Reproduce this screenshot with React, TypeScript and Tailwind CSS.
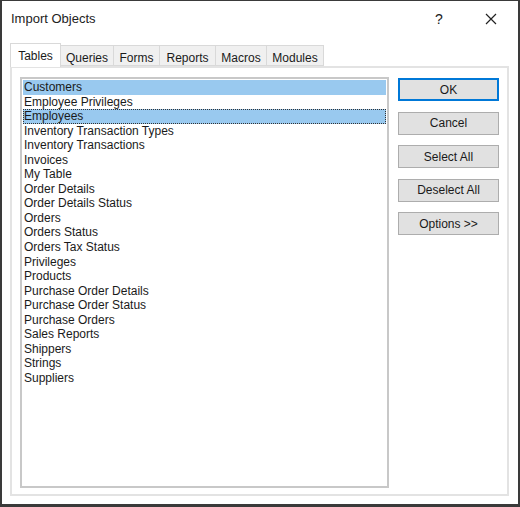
const tabs: [string, number][] = [
  ["Tables", 51],
  ["Queries", 53],
  ["Forms", 46],
  ["Reports", 56],
  ["Macros", 51],
  ["Modules", 57],
];

const items = [
  "Customers",
  "Employee Privileges",
  "Employees",
  "Inventory Transaction Types",
  "Inventory Transactions",
  "Invoices",
  "My Table",
  "Order Details",
  "Order Details Status",
  "Orders",
  "Orders Status",
  "Orders Tax Status",
  "Privileges",
  "Products",
  "Purchase Order Details",
  "Purchase Order Status",
  "Purchase Orders",
  "Sales Reports",
  "Shippers",
  "Strings",
  "Suppliers",
];

const buttons = ["OK", "Cancel", "Select All", "Deselect All", "Options >>"];

export default function App() {
  return (
    <div
      className="w-[520px] h-[507px] bg-white border-x-2 border-b-[3px] border-t border-[#3a3a3a] relative text-[12px] text-[#1a1a1a]"
      style={{ fontFamily: '"Liberation Sans", Arial, sans-serif' }}
    >
      {/* title bar */}
      <div className="h-[36px] flex items-center pl-[9px] pr-[18px]">
        <span className="text-[13px] text-[#222] flex-1">Import Objects</span>
        <span className="text-[14px] w-[10px] mr-[40px]">?</span>
        <svg width="12" height="12" viewBox="0 0 12 12" className="mr-[3px]">
          <path d="M1 1 L11 11 M11 1 L1 11" stroke="#222" strokeWidth="1.2" />
        </svg>
      </div>

      {/* tabs */}
      <div className="ml-[8px] mt-[5px] flex items-end h-[24px]">
        {tabs.map(([t, w], i) =>
          i === 0 ? (
            <div
              key={t}
              style={{ width: w }}
              className="h-[24px] pt-[3px] text-center bg-white border border-b-0 border-[#d9d9d9] relative z-10 -mb-px"
            >
              {t}
            </div>
          ) : (
            <div
              key={t}
              style={{ width: w }}
              className="h-[21px] pt-[3px] text-center bg-[#f0f0f0] border border-l-0 border-[#d9d9d9]"
            >
              {t}
            </div>
          )
        )}
      </div>

      {/* panel */}
      <div className="ml-[8px] w-[499px] h-[430px] border-2 border-[#e3e3e3] flex gap-[9px] pl-[8px] pt-[9px]">
        <div className="w-[369px] h-[411px] border-2 border-[#c8c8c8] pt-px px-px">
          {items.map((it) => {
            const sel = it === "Customers" || it === "Employees";
            const focus = it === "Employees";
            return (
              <div
                key={it}
                className={
                  "h-[14.55px] leading-[14px] pl-px " +
                  (sel ? "bg-[#99c9ef] " : "") +
                  (focus ? "outline-1 outline-dotted outline-[#333] -outline-offset-1" : "")
                }
              >
                {it}
              </div>
            );
          })}
        </div>
        <div className="flex flex-col gap-[10.5px] pt-[1px]">
          {buttons.map((b, i) => (
            <div
              key={b}
              className={
                "w-[101px] h-[23px] flex items-center justify-center bg-[#e1e1e1] " +
                (i === 0 ? "border-2 border-[#0078d7]" : "border border-[#adadad]")
              }
            >
              {b}
            </div>
          ))}
        </div>
      </div>
    </div>
  );
}
